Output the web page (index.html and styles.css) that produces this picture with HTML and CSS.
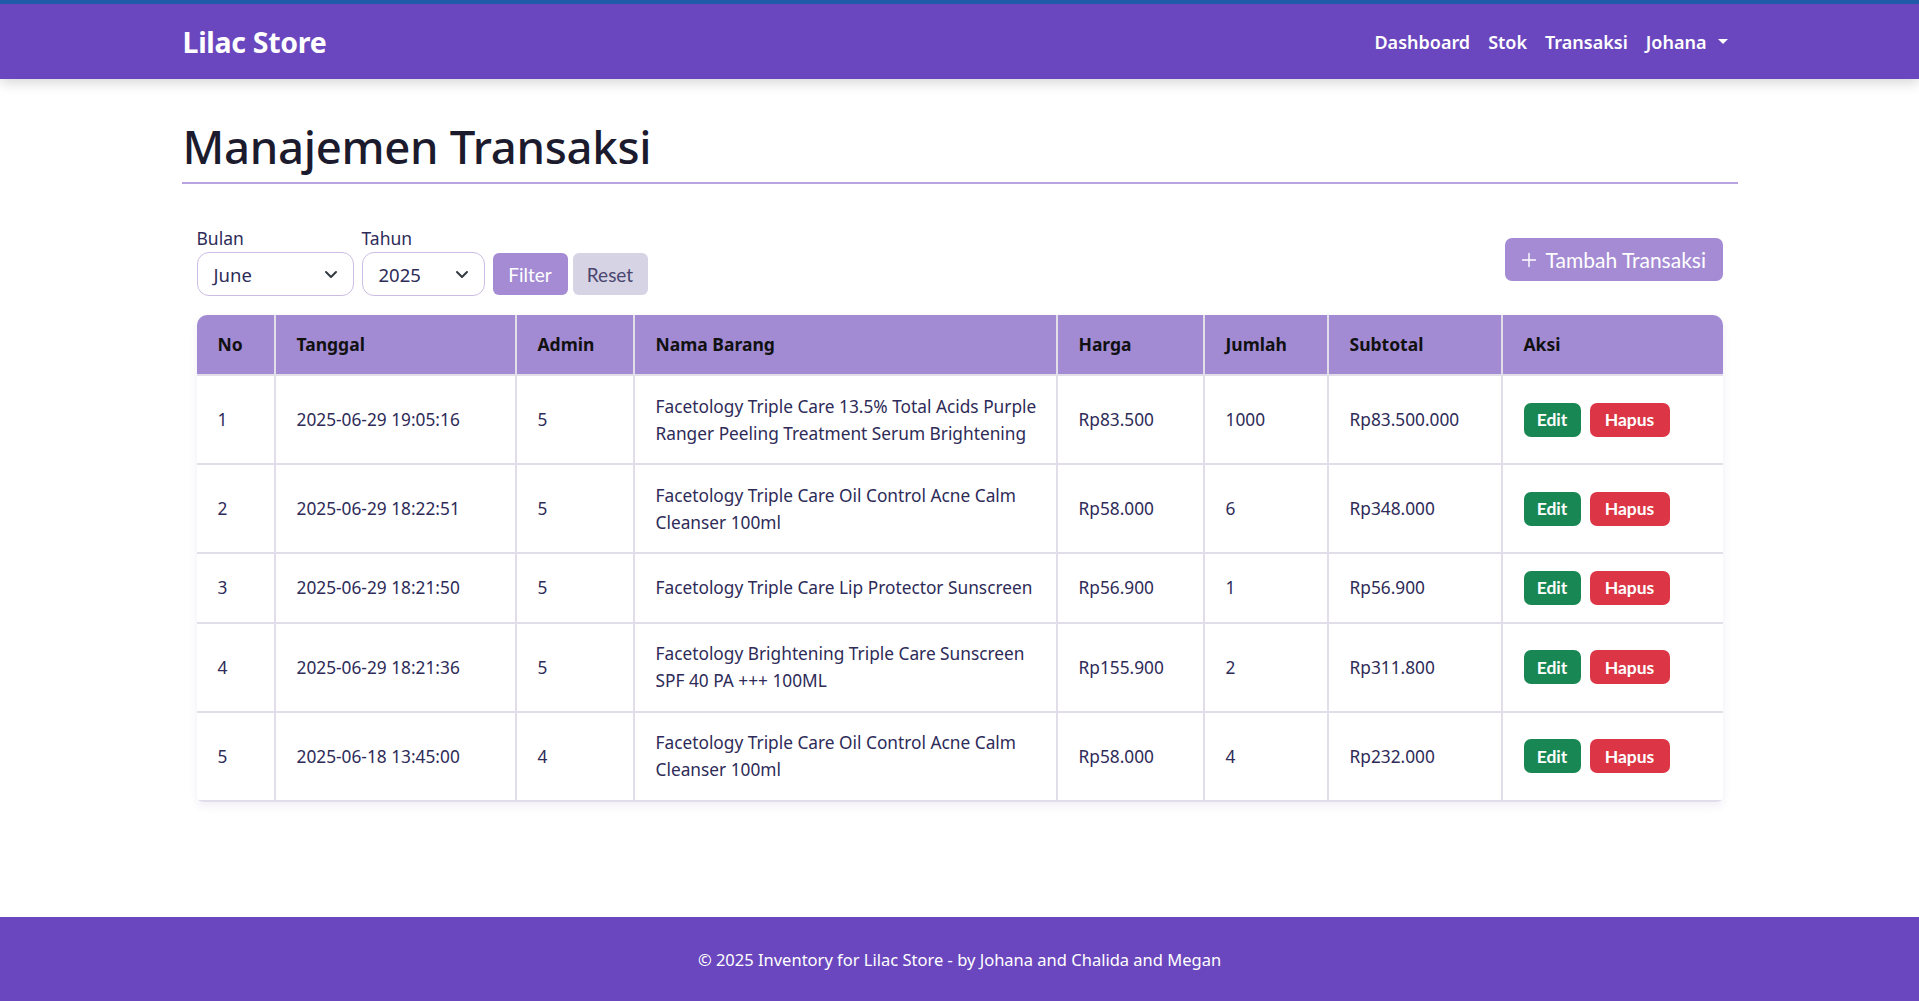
FILE: index.html
```html
<!DOCTYPE html>
<html lang="id">
<head>
<meta charset="utf-8">
<title>Manajemen Transaksi - Lilac Store</title>
<link rel="stylesheet" href="styles.css">
</head>
<body>
<nav class="navbar">
  <div class="nav-inner">
    <a class="brand" href="#">Lilac Store</a>
    <ul class="nav-links">
      <li><a href="#">Dashboard</a></li>
      <li><a href="#">Stok</a></li>
      <li><a href="#">Transaksi</a></li>
      <li><a href="#" class="dropdown">Johana <span class="caret"></span></a></li>
    </ul>
  </div>
</nav>

<main class="container">
  <h1 class="page-title">Manajemen Transaksi</h1>

  <div class="content">
    <div class="toolbar">
      <form class="filter">
        <div class="field">
          <label>Bulan</label>
          <div class="select w-month">June<svg class="chev" viewBox="0 0 16 16"><path d="M3 6l5 5 5-5" fill="none" stroke="#343a40" stroke-width="2" stroke-linecap="round" stroke-linejoin="round"/></svg></div>
        </div>
        <div class="field">
          <label>Tahun</label>
          <div class="select w-year">2025<svg class="chev" viewBox="0 0 16 16"><path d="M3 6l5 5 5-5" fill="none" stroke="#343a40" stroke-width="2" stroke-linecap="round" stroke-linejoin="round"/></svg></div>
        </div>
        <button type="button" class="btn btn-filter">Filter</button>
        <button type="button" class="btn btn-reset">Reset</button>
      </form>
      <button type="button" class="btn btn-add"><svg class="plus" viewBox="0 0 16 16"><path d="M8 1.5v13M1.5 8h13" stroke="#fff" stroke-width="1.4" stroke-linecap="round"/></svg>Tambah Transaksi</button>
    </div>

    <div class="table-wrap">
      <table class="tx">
        <colgroup>
          <col style="width:78px"><col style="width:241px"><col style="width:118px"><col style="width:423px"><col style="width:147px"><col style="width:124px"><col style="width:174px"><col style="width:221px">
        </colgroup>
        <thead>
          <tr><th>No</th><th>Tanggal</th><th>Admin</th><th>Nama Barang</th><th>Harga</th><th>Jumlah</th><th>Subtotal</th><th>Aksi</th></tr>
        </thead>
        <tbody>
          <tr><td>1</td><td>2025-06-29 19:05:16</td><td>5</td><td class="name">Facetology Triple Care 13.5% Total Acids Purple<br>Ranger Peeling Treatment Serum Brightening</td><td>Rp83.500</td><td>1000</td><td>Rp83.500.000</td><td><div class="actions"><button class="sbtn edit">Edit</button><button class="sbtn del">Hapus</button></div></td></tr>
          <tr><td>2</td><td>2025-06-29 18:22:51</td><td>5</td><td class="name">Facetology Triple Care Oil Control Acne Calm<br>Cleanser 100ml</td><td>Rp58.000</td><td>6</td><td>Rp348.000</td><td><div class="actions"><button class="sbtn edit">Edit</button><button class="sbtn del">Hapus</button></div></td></tr>
          <tr><td>3</td><td>2025-06-29 18:21:50</td><td>5</td><td class="name">Facetology Triple Care Lip Protector Sunscreen</td><td>Rp56.900</td><td>1</td><td>Rp56.900</td><td><div class="actions"><button class="sbtn edit">Edit</button><button class="sbtn del">Hapus</button></div></td></tr>
          <tr><td>4</td><td>2025-06-29 18:21:36</td><td>5</td><td class="name">Facetology Brightening Triple Care Sunscreen<br>SPF 40 PA +++ 100ML</td><td>Rp155.900</td><td>2</td><td>Rp311.800</td><td><div class="actions"><button class="sbtn edit">Edit</button><button class="sbtn del">Hapus</button></div></td></tr>
          <tr><td>5</td><td>2025-06-18 13:45:00</td><td>4</td><td class="name">Facetology Triple Care Oil Control Acne Calm<br>Cleanser 100ml</td><td>Rp58.000</td><td>4</td><td>Rp232.000</td><td><div class="actions"><button class="sbtn edit">Edit</button><button class="sbtn del">Hapus</button></div></td></tr>
        </tbody>
      </table>
    </div>
  </div>
</main>

<footer class="footer">© 2025 Inventory for Lilac Store - by Johana and Chalida and Megan</footer>
</body>
</html>
```
FILE: styles.css
```css
* { box-sizing: border-box; }
html, body { margin: 0; padding: 0; }
body {
  min-height: 100vh;
  display: flex;
  flex-direction: column;
  font-family: "Noto Sans", "Open Sans", sans-serif;
  color: #2e2b58;
  background: #fff;
}
a { text-decoration: none; color: inherit; }

.navbar {
  background: #6a47be;
  border-top: 4px solid #1f5ba8;
  height: 79px;
  box-shadow: 0 4px 12px rgba(0,0,0,0.16);
  position: relative;
  z-index: 2;
}
.nav-inner {
  width: 1556px;
  margin: 0 auto;
  height: 100%;
  display: flex;
  align-items: center;
  justify-content: space-between;
}
.brand {
  color: #fff;
  font-weight: 700;
  font-size: 28.5px;
  letter-spacing: -0.3px;
  padding-left: 1px;
}
.nav-links {
  list-style: none;
  margin: 0;
  padding: 0 10px 0 0;
  display: flex;
  gap: 18px;
}
.nav-links a {
  color: #fff;
  font-weight: 600;
  font-size: 18px;
  display: flex;
  align-items: center;
}
.caret {
  display: inline-block;
  margin-left: 11px;
  border-top: 5px solid #fff;
  border-left: 5px solid transparent;
  border-right: 5px solid transparent;
}

.container {
  width: 1556px;
  margin: 0 auto;
  flex: 1;
}
.page-title {
  margin: 37px 0 0;
  font-size: 45.5px;
  font-weight: 500;
  line-height: 60px;
  color: #1c1b2e;
  padding: 0 0 6px 1px;
  border-bottom: 2px solid #b9a3e3;
  letter-spacing: -0.3px;
}

.content { padding: 0 15px; }
.toolbar {
  margin-top: 42px;
  display: flex;
  align-items: center;
  justify-content: space-between;
}
.filter {
  display: flex;
  align-items: flex-end;
  gap: 8px;
}
.field { display: flex; flex-direction: column; }
.field label {
  font-size: 17.5px;
  line-height: 24px;
  margin-bottom: 2px;
  color: #2e2b58;
}
.select {
  height: 44px;
  border: 1.5px solid #cbbde3;
  border-radius: 12px;
  padding: 0 14px 0 16px;
  font-size: 18.5px;
  display: flex;
  align-items: center;
  justify-content: space-between;
  color: #2e2b58;
  background: #fff;
}
.w-month { width: 157px; }
.w-year { width: 123px; }
.chev { width: 16px; height: 16px; }

.btn {
  border: 0;
  font-family: "Lato", "Noto Sans", sans-serif;
  font-size: 19px;
  cursor: pointer;
}
.btn-filter {
  width: 75px; height: 42px;
  background: #a48bd4; color: #fff;
  border-radius: 6px;
  margin-bottom: 1px;
}
.btn-reset {
  width: 75px; height: 42px;
  background: #d6d3e4; color: #4a4670;
  border-radius: 6px;
  margin-left: -3px;
  margin-bottom: 1px;
}
.btn-add {
  height: 43px;
  width: 218px;
  padding: 0 0 0 16px;
  background: #a48bd4; color: #fff;
  border-radius: 7px;
  display: flex;
  align-items: center;
  gap: 9px;
  font-size: 21px;
  margin-bottom: 3px;
}
.plus { width: 16px; height: 16px; }

.table-wrap {
  margin-top: 19px;
  border-radius: 10px 10px 6px 6px;
  overflow: hidden;
  box-shadow: 0 4px 10px rgba(60,40,120,0.08);
}
.tx {
  width: 1526px;
  border-collapse: collapse;
  table-layout: fixed;
}
.tx th {
  background: #a38bd4;
  color: #111;
  text-align: left;
  font-weight: 700;
  font-size: 17.5px;
  line-height: 28px;
  padding: 15px 18px 16px 21px;
  border-left: 2px solid #e1dee9;
}
.tx td {
  font-size: 17.3px;
  line-height: 27px;
  padding: 16.6px 18px 16.6px 21px;
  border-left: 2px solid #e1dee9;
  border-top: 2px solid #e1dee9;
  vertical-align: middle;
  color: #2e2b58;
}
.tx td.name { white-space: nowrap; }
.tx tr > :first-child { border-left: 0; }
.tx tbody tr:last-child td { border-bottom: 2px solid #e1dee9; }

.actions { display: flex; gap: 9px; }
.sbtn {
  border: 0;
  height: 34px;
  border-radius: 7px;
  color: #fff;
  font-family: "Lato", "Noto Sans", sans-serif;
  font-weight: 700;
  font-size: 17.5px;
  padding: 0;
}
.edit { background: #198754; width: 57px; }
.del { background: #dc3545; width: 80px; }

.footer {
  background: #6a47be;
  color: #fff;
  height: 84px;
  display: flex;
  align-items: center;
  justify-content: center;
  font-size: 16.5px;
  margin-top: 100px;
}
```
